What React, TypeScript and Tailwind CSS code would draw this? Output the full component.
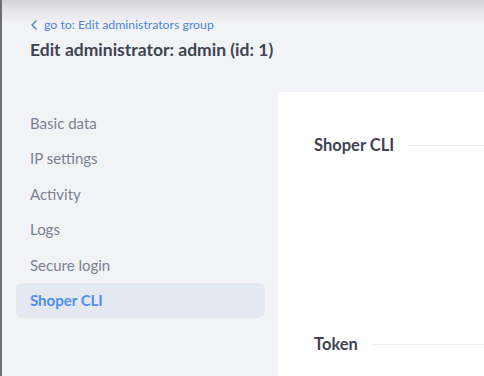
import { ChevronLeft } from "lucide-react";

const navItems = ["Basic data", "IP settings", "Activity", "Logs", "Secure login", "Shoper CLI"];

const SectionTitle = ({ label }: { label: string }) => (
    <div className="flex items-center gap-[14px] h-[24px]">
        <h2 className="text-[16.5px] font-bold text-[#3f4452] whitespace-nowrap">{label}</h2>
        <div className="flex-grow h-px bg-[#eceef2]" />
    </div>
);

export default function App() {
    const active = "Shoper CLI";

    return (
        <div
            className="w-[484px] h-[376px] overflow-hidden border-l-2 border-[#6e6f73] bg-[#f2f3f7] bg-[linear-gradient(to_bottom,#d2d2d7_0px,#e6e6ea_12px,#f2f3f7_24px)] flex flex-col"
            style={{ fontFamily: "Lato, 'Noto Sans', sans-serif" }}
        >
            {/* Cabecera */}
            <div className="pl-[28px] pt-[16px]">
                <a className="-ml-[4px] flex items-center gap-[2px] text-[12.3px] text-[#4a84db] leading-[17px]">
                    <ChevronLeft size={16} strokeWidth={2.2} />
                    go to: Edit administrators group
                </a>
                <h1 className="mt-[6px] text-[17.5px] font-bold text-[#3f4452] leading-[22px]">
                    Edit administrator: admin (id: 1)
                </h1>
            </div>

            <div className="flex flex-grow mt-[31px]">
                {/* Menú lateral */}
                <nav className="w-[263px] shrink-0 pl-[14px] pt-[13px] flex flex-col">
                    {navItems.map((item) => (
                        <div
                            key={item}
                            className={
                                item === active
                                    ? "h-[35px] flex items-center pl-[14px] rounded-[6px] bg-[#e4e8f0] text-[#4d8ef2] font-bold text-[15px]"
                                    : "h-[35.6px] flex items-center pl-[14px] text-[#7b8193] text-[15px]"
                            }
                        >
                            {item}
                        </div>
                    ))}
                </nav>

                {/* Panel */}
                <div className="flex-grow ml-[13px] bg-white pl-[36px] pt-[41px] flex flex-col">
                    <SectionTitle label="Shoper CLI" />
                    <div className="mt-[175px]">
                        <SectionTitle label="Token" />
                    </div>
                </div>
            </div>
        </div>
    );
}
